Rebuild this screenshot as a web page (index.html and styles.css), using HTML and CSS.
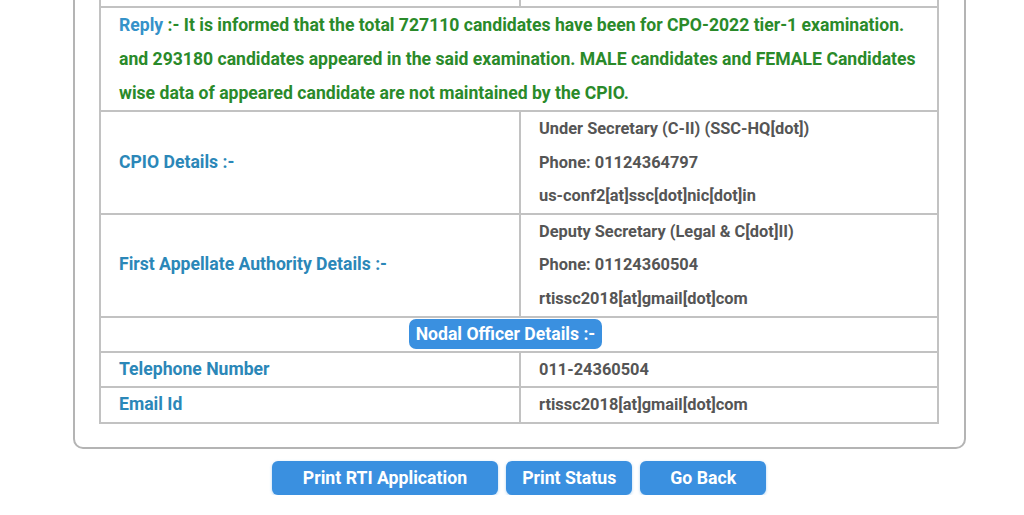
FILE: index.html
```html
<!DOCTYPE html>
<html lang="en">
<head>
    <meta charset="UTF-8">
    <meta name="viewport" content="width=device-width, initial-scale=1.0">
    <title>RTI Status</title>
    <link rel="stylesheet" href="styles.css">
</head>
<body>
    <div class="status-card">
        <table class="rti-table">
            <tr class="top-row">
                <td class="label"></td>
                <td class="value"></td>
            </tr>
            <tr>
                <td colspan="2" class="reply">
                    <span class="reply-title">Reply</span> :- It is informed that the total 727110 candidates have been for CPO-2022 tier-1 examination. and 293180 candidates appeared in the said examination. MALE candidates and FEMALE Candidates wise data of appeared candidate are not maintained by the CPIO.
                </td>
            </tr>
            <tr>
                <td class="label">CPIO Details :-</td>
                <td class="value">
                    Under Secretary (C-II) (SSC-HQ[dot])<br>
                    Phone: 01124364797<br>
                    us-conf2[at]ssc[dot]nic[dot]in
                </td>
            </tr>
            <tr>
                <td class="label">First Appellate Authority Details :-</td>
                <td class="value">
                    Deputy Secretary (Legal &amp; C[dot]II)<br>
                    Phone: 01124360504<br>
                    rtissc2018[at]gmail[dot]com
                </td>
            </tr>
            <tr>
                <td colspan="2" class="section">
                    <span class="badge">Nodal Officer Details :-</span>
                </td>
            </tr>
            <tr>
                <td class="label">Telephone Number</td>
                <td class="value">011-24360504</td>
            </tr>
            <tr>
                <td class="label">Email Id</td>
                <td class="value">rtissc2018[at]gmail[dot]com</td>
            </tr>
        </table>
    </div>

    <div class="actions">
        <button class="btn btn-wide">Print RTI Application</button>
        <button class="btn">Print Status</button>
        <button class="btn btn-back">Go Back</button>
    </div>
</body>
</html>
```

FILE: styles.css
```css
body {
    font-family: Roboto, "Liberation Sans", Arial, sans-serif;
    background-color: #fff;
    margin: 0;
    padding: 0;
}

/* Outer card */
.status-card {
    width: 893px;
    margin: -40px 0 0 73px;
    padding: 0 25px 23px 24px;
    box-sizing: border-box;
    border: 2px solid #b4b4b4;
    border-radius: 10px;
}

/* Details table */
.rti-table {
    width: 840px;
    border-collapse: collapse;
    table-layout: fixed;
}

.rti-table td {
    border: 2px solid #c2c2c2;
    padding: 0 19px 0 18px;
    line-height: 33.6px;
    font-weight: bold;
    vertical-align: middle;
}

.rti-table .top-row td {
    height: 42px;
}

.rti-table .label {
    width: 381px;
    color: #2b87b8;
    font-size: 17.6px;
}

.rti-table .value {
    color: #555;
    font-size: 16.4px;
}

.rti-table .reply {
    color: #2a8a2a;
    font-size: 17.6px;
    line-height: 34px;
}

.reply-title {
    color: #3592c9;
}

.rti-table .section {
    text-align: center;
    padding: 1px 0;
    line-height: 30px;
}

.badge {
    display: inline-block;
    background-color: #3a90e0;
    color: #fff;
    font-size: 17.6px;
    padding: 0 7px;
    border-radius: 7px;
    margin-right: 27px;
}

/* Buttons */
.actions {
    display: flex;
    justify-content: center;
    gap: 8px;
    margin: 12px 0 0 14px;
}

.btn {
    height: 34px;
    padding: 0 16px;
    border: none;
    border-radius: 6px;
    background-color: #3a90e0;
    color: #fff;
    font-family: Roboto, "Liberation Sans", Arial, sans-serif;
    font-size: 17.7px;
    font-weight: bold;
    box-shadow: 0 1px 3px rgba(58, 144, 224, 0.4);
}

.btn-wide {
    padding: 0 31px;
}

.btn-back {
    padding: 0 30px;
}
```
